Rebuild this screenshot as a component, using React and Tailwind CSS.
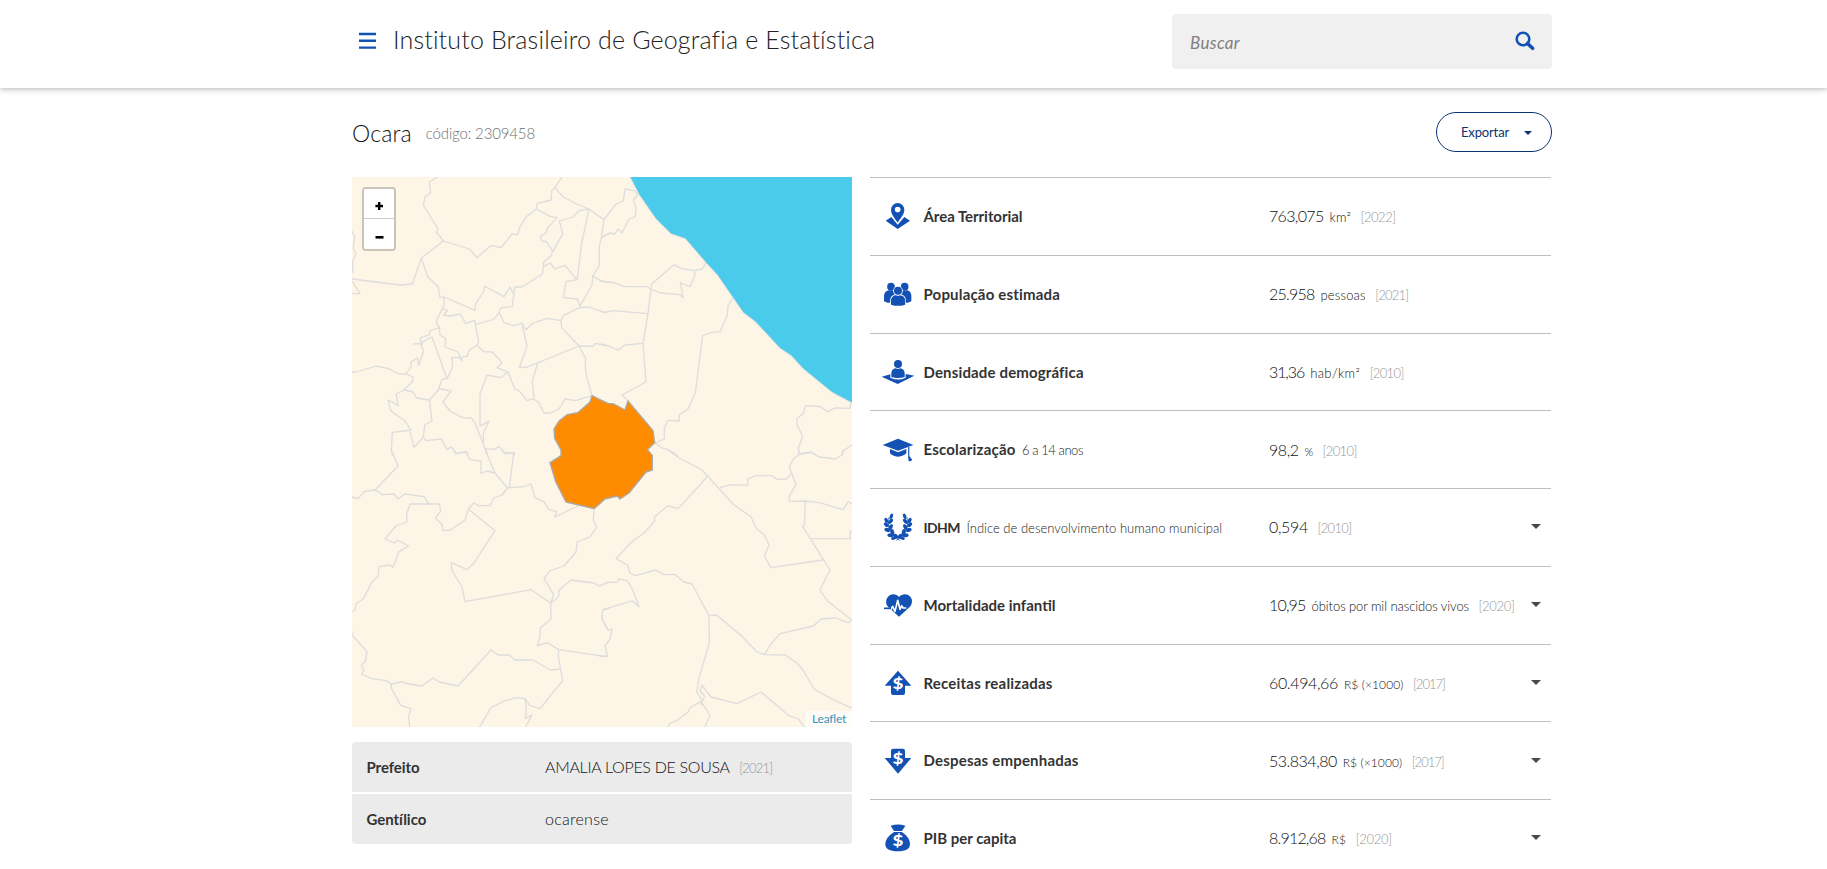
const BLUE = "#1351b4";

/* Municipality borders, one list of polylines per map tile. */
const TILES = [
  {
    at: "translate(-2 -2) scale(0.33333)",
    lines: [
      "262,6 238,21 242,53 225,66 220,90 264,162 259,171 280,198 214,249 187,327 150,330 6,312",
      "280,198 358,222 381,248 422,212 454,217 486,177 503,179 510,155 528,126 559,102 561,86 604,75 605,47 615,38 636,6",
      "615,38 640,66 680,87 717,102 762,134 754,190 748,212 748,271 728,303 726,330 690,393",
      "754,188 782,173",
      "559,102 600,124 621,128 592,160 590,172 571,184 575,198 589,200 608,228 602,243 581,261 580,277 577,297 516,336 494,336 487,395 454,398 447,411 462,443 492,452 515,444 528,464 549,444 593,430 633,437 640,422 690,397 718,396 762,412 780,409",
      "717,102 689,106 669,126 628,138 638,177 608,230",
      "581,275 600,264 615,282 645,271 681,314 648,320 640,368 682,372 690,393",
      "717,102 694,210 682,314",
      "728,303 756,320 782,322",
      "214,249 233,305 265,336 270,367 283,366 375,406 376,388 402,348 403,333 462,365 480,336 491,358",
      "283,366 281,395 276,402 293,407 280,420 300,423 331,417 347,446 374,436 376,449 433,432 447,413",
      "376,449 386,500 381,511 401,530 427,531 456,563 441,578 474,591 494,641 510,650 531,677 550,671 567,684 582,714 600,714 627,702 645,672 676,677 726,662",
      "276,402 258,440 268,457 270,480 287,491 285,516 324,531 335,557 338,545 351,544 357,526 381,511",
      "335,557 328,547 306,548 308,576 291,611 276,613 265,645 238,675 200,669 189,651 162,645 138,657 145,692 114,675 123,708 165,738 183,765 127,772 124,825 128,842",
      "268,457 240,468 237,480 211,488 213,503 246,486 291,611",
      "190,507 218,506 213,512 221,528 206,571 203,549 184,560 184,573 168,597 189,606 188,619 162,645",
      "6,591 20,591 78,573 116,581 146,597 168,597",
      "474,591 452,608 411,600 390,657 390,753 417,739 400,774 401,802",
      "262,645 272,642 303,648 279,681 300,708 337,728 364,729 374,741 412,838",
      "238,675 246,738 224,750 220,786 192,817 180,770",
      "220,786 228,797 274,792 291,823 304,816 319,835 350,830 354,840",
      "405,821 433,823 447,815 465,834 492,834 495,840",
      "515,444 531,512 508,578 532,576 687,513 730,514 736,505 782,515",
      "633,437 635,458 687,513 707,550 706,580 711,610 726,662",
      "564,561 547,618 552,671",
      "6,168 14,186 10,222 18,235 8,260 8,295",
      "6,318 30,356 6,356",
    ],
  },
  {
    at: "translate(248 -2) scale(0.33333)",
    lines: [
      "0,125 12,134 48,87 70,78 75,42 104,47 114,57 100,75 108,98 106,125 87,132 66,174 54,162 45,177 30,174 4,188",
      "0,318 42,323 75,335 141,335 153,342 180,354 240,359 249,368 241,324 270,335 285,300 282,287 307,282 318,263",
      "153,342 155,327 222,269 243,280 282,287",
      "153,342 144,416 129,505 138,621 66,660 84,678",
      "0,409 14,412 38,407 144,416",
      "0,507 21,511 54,525 75,510 129,505",
      "400,368 384,391 382,420 360,470 331,473 308,482 286,653 264,702 238,719 237,738 204,736 193,758 193,792 165,804 186,819 204,824 232,842",
      "752,684 750,700 705,699 684,710 660,695 618,692 609,717 591,730 591,750 608,783 595,820 598,837",
      "600,837 634,831 648,840",
      "726,840 728,828 756,810",
    ],
  },
  {
    at: "translate(-2 273) scale(0.33333)",
    lines: [
      "124,0 144,48 75,120 43,125 24,146 6,141",
      "75,120 98,134 132,132 144,147 164,132 222,140 238,163",
      "180,162 268,162 272,184 256,204 277,225 278,242 302,240 345,210 355,177 372,159 386,167 420,167 432,144 456,135 472,114 435,69 406,0",
      "180,162 170,192 170,216 138,228 105,267 135,279 141,270 176,288 147,305 129,352 118,345 87,350 84,378 66,396 40,446 18,462 15,480 6,485",
      "290,-2 292,0",
      "310,0 317,11 348,6 360,29 393,33 393,70 411,63 435,69",
      "455,0 465,11 491,9 478,114",
      "472,114 520,110 543,102 555,143 582,155 597,179 620,185 614,201 684,168",
      "355,177 435,242 372,339 351,359 303,337 306,362 336,411 345,455 543,419 602,459",
      "732,178 730,210 740,231 720,261 681,276 678,306 642,348 600,362 582,386 611,434 602,459",
      "602,459 625,441 628,420 663,390 732,399 747,408 774,397",
      "602,459 603,507 571,534 570,560 562,587 592,578 626,599 770,620",
      "780,474 758,480 756,506 774,540",
      "626,599 625,620 638,692 570,776 540,767 525,746 500,743 465,752 423,773 388,832",
      "525,746 529,772 526,806 546,795 526,832",
      "631,657 600,660 550,630 495,630 478,615 444,615 423,600 324,708 268,696 249,684 216,708 162,699 159,694 124,702 110,692 64,686 34,672 42,660 34,645 46,635 51,605 6,555 6,544",
      "124,702 124,715 153,767 183,776 176,800 179,832",
    ],
  },
  {
    at: "translate(248 273) scale(0.33333)",
    lines: [
      "204,0 238,24 306,60 402,165 453,200 468,234 493,255 507,285 493,318 513,353 669,330",
      "323,78 300,105 234,176 204,167 163,201 164,213 132,249 98,273 48,326 82,345 90,369 105,377 168,360 192,374 224,373 252,396 276,402 327,497 350,495 425,558 471,606 493,614 556,615 591,639 609,660 642,717 705,752 758,775",
      "360,113 393,104 443,106 443,87 468,77 516,77 530,88 558,87 576,70",
      "595,0 600,12 580,26 568,50 588,104 568,137 568,154 616,153 658,158 729,179 745,155 758,163",
      "600,12 634,7 657,21 705,27 726,15 730,3 735,0",
      "616,153 613,227 608,230 690,360 660,420 682,453 756,510 744,518 708,504 663,507 640,528 540,551 513,582 493,614",
      "631,266 750,266 750,245 758,243",
      "327,497 328,579 298,680 290,726 302,744 303,755 330,795 314,832",
      "303,755 270,773 265,785 230,812 212,819 202,832",
      "303,765 314,738 300,723 306,705 333,741 411,761 483,726 567,797 595,807 614,832",
      "24,397 52,396 55,387 82,392 99,422 117,470 97,453 8,479 6,507 24,540 36,538 30,567 15,588 23,618 0,620 20,619",
      "24,397 0,407",
    ],
  },
];

const REGION =
  "726,662 750,674 774,685 792,687 825,705 834,678 909,767 914,803 892,824 907,841 907,885 888,891 837,954 810,972 802,963 765,972 732,1001 648,981 617,920 600,863 633,842 633,825 614,790 612,762 627,738 651,719 683,713 720,681";

function MunicipalityMap() {
  return (
    <div className="relative h-[550px] w-[500px] overflow-hidden bg-[#fdf5e6]">
      <svg width="500" height="550" viewBox="0 0 500 550" fill="none" strokeLinejoin="round">
        {TILES.map((tile) => (
          <g key={tile.at} transform={tile.at} stroke="#dddddd" strokeWidth="3.9">
            {tile.lines.map((points) => (
              <polyline key={points} points={points} />
            ))}
          </g>
        ))}
        <g transform="translate(248 -2) scale(0.33333)">
          <polygon
            fill="#4acbeb"
            stroke="#dddddd"
            strokeWidth="3"
            points="86,-2 90,6 118,60 168,132 214,177 256,191 318,263 352,300 430,413 466,440 540,520 574,542 608,580 696,652 764,688 764,-2"
          />
        </g>
        <g transform="translate(-2 -2) scale(0.33333)">
          <polygon points={REGION} fill="#ff8c00" stroke="#aaaaaa" strokeWidth="4" />
        </g>
      </svg>
      <div className="absolute left-[10px] top-[10px] w-[34px] rounded-[4px] border-2 border-black/20 bg-clip-padding">
        <div className="flex h-[30px] items-center justify-center rounded-t-[2px] border-b border-[#ccc] bg-white pt-[5px]">
          <svg width="8" height="8" viewBox="0 0 8 8" fill="#000">
            <path d="M3 0h2.4v2.8H8v2.4H5.4V8H3V5.2H.4V2.8H3z" />
          </svg>
        </div>
        <div className="flex h-[30px] items-center justify-center rounded-b-[2px] bg-white pt-[6px]">
          <svg width="9" height="3" viewBox="0 0 9 3" fill="#000">
            <path d="M.5 0h8v2.6h-8z" />
          </svg>
        </div>
      </div>
      <div className="absolute bottom-0 right-0 flex h-[16px] w-[46px] items-center bg-white/70 pl-[6px] text-[12px] leading-none tracking-[-0.2px] text-[#3a93b8]">
        Leaflet
      </div>
    </div>
  );
}

function Dollar({ y }) {
  return (
    <text
      transform={`translate(99 ${y}) scale(1.25 1)`}
      textAnchor="middle"
      fontFamily="Lato, sans-serif"
      fontWeight="900"
      fontSize="45"
      fill="#fff"
    >
      $
    </text>
  );
}

const leaf = (x, y, r, a, b) => (
  <ellipse key={x + "-" + y} cx={x} cy={y} rx={a} ry={b} transform={`rotate(${r} ${x} ${y})`} />
);

const LEAVES = [
  [79, 109, -68, 8.5, 4.8],
  [64, 121, 60, 8, 5.2],
  [77, 124, -48, 9, 5.2],
  [64, 134, 38, 8.5, 5.8],
  [77, 141, -62, 9, 5.6],
  [67, 150, 22, 9, 6],
  [82, 156, -105, 9, 5.6],
  [77, 166, 4, 10, 6],
  [93, 168, 45, 8, 5],
  [87, 174, -20, 9, 5],
];

const ICONS = {
  area: (
    <>
      <path d="M62 152L79 141L98 164L118 141L135 152L98 177Z" />
      <path fillRule="evenodd" d="M98 158C88 142 78 133 78 119A20 20 0 0 1 118 119C118 133 108 142 98 158ZM98 110A8.5 8.5 0 1 0 98 127A8.5 8.5 0 1 0 98 110Z" />
    </>
  ),
  people: (
    <>
      <circle cx="78" cy="350" r="11.5" />
      <circle cx="119" cy="350" r="11.5" />
      <path d="M57 394V379C57 367 65 361 75 361H123C133 361 139 367 139 379V394L128 398H68Z" />
      <circle cx="99" cy="363" r="14.500" fill="#fff" />
      <path fill="#fff" d="M75.500 410V392C75.500 378 84 373 99 373S122.500 378 122.500 392V410Z" />
      <circle cx="99" cy="362.500" r="12" />
      <path d="M78 404V392C78 381 86 375.500 93 375.500Q99 379 105 375.500C113 376 120.500 381 120.500 392V404Q99 411 78 404Z" />
    </>
  ),
  density: (
    <>
      <path d="M50 619L76 611.500V622Q99 633 122 622V611L148 616L98 641Z" />
      <circle cx="99" cy="581" r="12" />
      <path d="M79 620V609C79 599 86 594 92 593.500Q99 597 106 593.500C113 594 119 599 119 609V620Q99 626 79 620Z" />
    </>
  ),
  school: (
    <>
      <path d="M53 823L99 804.500L145 823L99 840.500Z" />
      <path d="M75 835L99 845L124 835V848Q116 857 99 858Q82 857 75 848Z" />
      <path d="M129.500 829H133V856L142 868L136 872H131L129.500 860Z" />
    </>
  ),
  laurel: (
    <>
      {LEAVES.map(([x, y, r, a, b]) => leaf(x, y, r, a, b))}
      {LEAVES.map(([x, y, r, a, b]) => leaf(198 - x, y, -r, a, b))}
      <path d="M72 112Q62 158 104 181M126 112Q136 158 94 181" fill="none" stroke={BLUE} strokeWidth="2.5" />
    </>
  ),
  heart: (
    <>
      <path d="M102 351C94 340 78 340 69 350C61 359 62 373 70 381L102 410L133 382C142 373 144 359 136 350C127 340 111 340 102 351Z" />
      <path d="M56 389H77L83 379L90 394L98 361L105 388L110 377L114 384H124" fill="none" stroke="#fff" strokeWidth="5" strokeLinejoin="round" />
      <path d="M57 385H78" fill="none" stroke={BLUE} strokeWidth="5" />
    </>
  ),
  income: (
    <>
      <path d="M99 571.500L139 616H120V638Q120 644 114 644H84Q78 644 78 638V616H59Z" />
      <Dollar y={627} />
    </>
  ),
  expense: (
    <>
      <path d="M99 879L139 832H120V810Q120 804 114 804H84Q78 804 78 810V832H59Z" />
      <Dollar y={851} />
    </>
  ),
  bag: (
    <>
      <path d="M77 1038Q99 1031 121 1038L111 1054H87Z" />
      <path d="M87 1057H111Q135 1074 135 1093Q135 1115 98 1115Q61 1115 61 1093Q61 1074 87 1057Z" />
      <Dollar y={1100} />
    </>
  ),
};

const ROWS = [
  { icon: "area", cy: 138, label: "Área Territorial", lt: "text-[15px] tracking-[-0.04px]", value: "763,075", vt: "tracking-[-0.67px]", unit: "km²", ut: "text-[13px] tracking-[0.2px]", year: "2022", yt: "tracking-[-0.48px]" },
  { icon: "people", cy: 372, label: "População estimada", lt: "text-[15px] tracking-[0.18px]", value: "25.958", vt: "tracking-[-0.77px]", unit: "pessoas", ut: "text-[13px] tracking-[0.17px]", year: "2021", yt: "tracking-[-0.82px]" },
  { icon: "density", cy: 605, label: "Densidade demográfica", lt: "text-[15px] tracking-[0.15px]", value: "31,36", vt: "tracking-[-1.1px]", unit: "hab/km²", ut: "text-[13px] tracking-[0.4px]", year: "2010", yt: "tracking-[-0.65px]" },
  { icon: "school", cy: 838, label: "Escolarização", lt: "text-[15px] tracking-[0.19px]", note: "6 a 14 anos", nt: "tracking-[-0.43px]", value: "98,2", vt: "tracking-[-0.46px]", unit: "%", ut: "text-[11px]", year: "2010", yt: "tracking-[-0.65px]" },
  { icon: "laurel", cy: 141, label: "IDHM", lt: "text-[14px] tracking-[-0.6px]", note: "Índice de desenvolvimento humano municipal", nt: "tracking-[0.02px]", value: "0,594", vt: "tracking-[-0.33px]", year: "2010", yt: "tracking-[-0.65px]", more: true },
  { icon: "heart", cy: 375, label: "Mortalidade infantil", lt: "text-[15px] tracking-[0px]", value: "10,95", vt: "tracking-[-0.82px]", unit: "óbitos por mil nascidos vivos", ut: "text-[13px] tracking-[-0.08px]", year: "2020", yt: "tracking-[-0.32px]", more: true },
  { icon: "income", cy: 608, label: "Receitas realizadas", lt: "text-[15px] tracking-[0.2px]", value: "60.494,66", vt: "tracking-[-0.36px]", unit: "R$ (×1000)", ut: "text-[12px] tracking-[0.1px]", year: "2017", yt: "tracking-[-0.98px]", more: true },
  { icon: "expense", cy: 841, label: "Despesas empenhadas", lt: "text-[15px] tracking-[0.2px]", value: "53.834,80", vt: "tracking-[-0.5px]", unit: "R$ (×1000)", ut: "text-[12px] tracking-[0.1px]", year: "2017", yt: "tracking-[-0.98px]", more: true },
  { icon: "bag", cy: 1075, label: "PIB per capita", lt: "text-[15px] tracking-[-0.01px]", value: "8.912,68", vt: "tracking-[-0.8px]", unit: "R$", ut: "text-[12px] tracking-[0.2px]", year: "2020", yt: "tracking-[-0.32px]", more: true },
];

function Caret({ className }) {
  return (
    <svg className={className} viewBox="0 0 10 5" preserveAspectRatio="none" fill="currentColor">
      <path d="M0 0H10L5 5Z" />
    </svg>
  );
}

function IndicatorRow({ row }) {
  return (
    <div className="flex h-[77.75px] items-center border-t border-[#bfbfbf] pl-[11px] pr-[10px]">
      <svg width="34" height="34" viewBox={`48 ${row.cy - 51} 102 102`} fill={BLUE} className="mr-[8.5px] shrink-0">
        {ICONS[row.icon]}
      </svg>
      <div className="flex w-[345.5px] shrink-0 items-baseline gap-[6.5px] whitespace-nowrap">
        <span className={`font-bold text-[#333] ${row.lt}`}>{row.label}</span>
        {row.note && <span className={`text-[13px] font-light text-[#222] ${row.nt}`}>{row.note}</span>}
      </div>
      <div className="flex flex-1 items-baseline whitespace-nowrap">
        <span className={`text-[16px] font-light text-[#111] ${row.vt}`}>{row.value}</span>
        {row.unit && <span className={`ml-[6px] font-light text-[#111] ${row.ut}`}>{row.unit}</span>}
        <span className={`ml-[9.5px] text-[13px] font-light text-[#969696] ${row.yt}`}>[{row.year}]</span>
      </div>
      {row.more && <Caret className="mb-[1px] h-[5px] w-[10px] shrink-0 text-[#4a4a4a]" />}
    </div>
  );
}

export default function App() {
  return (
    <div className="h-[869px] overflow-hidden bg-white font-['Lato','Open_Sans',sans-serif] text-[#333]">
      <header className="h-[88px] bg-white shadow-[0_1px_6px_rgba(0,0,0,0.3)]">
        <div className="ml-[352px] flex w-[1200px] items-start pt-[14px]">
          <svg width="17" height="17" viewBox="0 0 17 17" fill={BLUE} className="ml-[7px] mt-[18px]">
            <path d="M0 .8H17V3.200H0ZM0 7.600H17V10H0ZM0 14.400H17V16.800H0Z" />
          </svg>
          <h1 className="ml-[17px] mt-[7px] whitespace-nowrap text-[25px] font-light leading-[36px] tracking-[0.16px] text-[#222]">
            Instituto Brasileiro de Geografia e Estatística
          </h1>
          <div className="ml-auto flex h-[55px] w-[380px] items-center justify-between rounded-[4px] bg-[#f0f0f0] pl-[18px] pr-[17px]">
            <span className="pt-[2px] text-[17px] italic tracking-[0.34px] text-[#808080]">Buscar</span>
            <svg width="20" height="20" viewBox="0 0 20 20" fill="none" stroke={BLUE} className="mb-[1px]">
              <circle cx="8" cy="8" r="6.300" strokeWidth="2.600" />
              <path d="M12.500 12.500L17.600 17.300" strokeWidth="3.600" strokeLinecap="round" />
            </svg>
          </div>
        </div>
      </header>

      <main className="ml-[352px] w-[1200px]">
        <div className="flex h-[89px] items-start justify-between pt-[24px]">
          <div className="flex items-start gap-[14px] pt-[5px]">
            <h2 className="text-[23px] font-light leading-[32px] tracking-[0.15px] text-[#111]">Ocara</h2>
            <span className="text-[15px] font-light leading-[33px] tracking-[-0.15px] text-[#707070]">código: 2309458</span>
          </div>
          <button className="flex h-[40px] w-[116px] items-center rounded-full border border-[#0c326f] pl-[24px] pt-[1px] text-[13px] tracking-[-0.15px] text-[#0c326f]">
            Exportar
            <Caret className="ml-[15px] h-[4px] w-[8px]" />
          </button>
        </div>

        <div className="flex items-start gap-[18px]">
          <section>
            <MunicipalityMap />
            <dl className="mt-[15px] grid gap-[2px] overflow-hidden rounded-[4px]">
              <div className="flex h-[50px] items-center bg-[#ebebeb] pl-[14.500px]">
                <dt className="w-[178.500px] text-[15px] font-bold tracking-[-0.07px] text-[#333]">Prefeito</dt>
                <dd className="flex items-baseline">
                  <span className="text-[16px] font-light tracking-[-0.3px] text-[#111]">AMALIA LOPES DE SOUSA</span>
                  <span className="ml-[9.500px] text-[13px] font-light tracking-[-0.82px] text-[#969696]">[2021]</span>
                </dd>
              </div>
              <div className="flex h-[50px] items-center bg-[#ebebeb] pl-[14.500px]">
                <dt className="w-[178.500px] text-[15px] font-bold tracking-[-0.05px] text-[#333]">Gentílico</dt>
                <dd className="text-[16px] font-light tracking-[0.27px] text-[#111]">ocarense</dd>
              </div>
            </dl>
          </section>

          <section className="w-[681px]">
            {ROWS.map((row) => (
              <IndicatorRow key={row.label} row={row} />
            ))}
          </section>
        </div>
      </main>
    </div>
  );
}
